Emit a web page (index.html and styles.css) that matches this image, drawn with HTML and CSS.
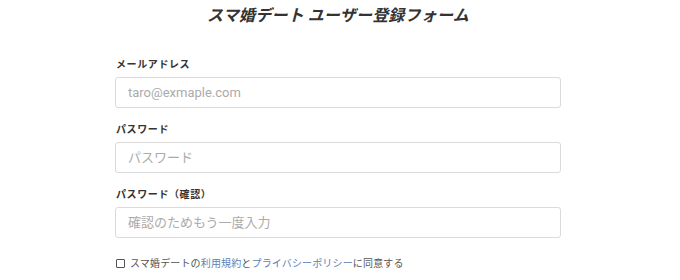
FILE: index.html
```html
<!DOCTYPE html>
<html lang="ja">
<head>
<meta charset="utf-8">
<title>スマ婚デート ユーザー登録フォーム</title>
<link rel="stylesheet" href="styles.css">
</head>
<body>
<main class="page">
  <h1 class="title">スマ婚デート ユーザー登録フォーム</h1>
  <form class="form">
    <div class="field">
      <label class="label" for="email">メールアドレス</label>
      <input class="input" id="email" type="email" placeholder="taro@exmaple.com">
    </div>
    <div class="field">
      <label class="label" for="pw">パスワード</label>
      <input class="input" id="pw" type="password" placeholder="パスワード">
    </div>
    <div class="field">
      <label class="label" for="pw2">パスワード（確認）</label>
      <input class="input" id="pw2" type="password" placeholder="確認のためもう一度入力">
    </div>
    <label class="agree">
      <span class="box"></span>
      <span class="agree-text">スマ婚デートの<a href="#" class="link">利用規約</a>と<a href="#" class="link">プライバシーポリシー</a>に同意する</span>
    </label>
  </form>
</main>
</body>
</html>
```
FILE: styles.css
```css
html, body {
  margin: 0;
  padding: 0;
  background: #ffffff;
}
body {
  font-family: "Noto Sans CJK JP", "Noto Sans", sans-serif;
  color: #333333;
}
.page {
  width: 446px;
  padding: 0 119px 0 115px;
}
.title {
  margin: 0;
  height: 28px;
  line-height: 28px;
  text-align: center;
  font-size: 16px;
  font-weight: 700;
  font-style: italic;
  color: #333333;
  letter-spacing: 0.2px;
}
.form {
  display: flex;
  flex-direction: column;
  gap: 14px;
  margin-top: 29px;
}
.field {
  display: flex;
  flex-direction: column;
  gap: 6px;
}
.label {
  font-size: 10px;
  line-height: 14px;
  font-weight: 700;
  letter-spacing: 0.6px;
  color: #333333;
  padding-left: 1px;
}
.input {
  box-sizing: border-box;
  width: 446px;
  height: 31px;
  margin: 0;
  padding: 0 12px;
  border: 1px solid #dadada;
  border-radius: 3px;
  background: #ffffff;
  font-family: Roboto, "Noto Sans CJK JP", sans-serif;
  font-size: 13px;
  color: #333333;
  outline: none;
}
.input::placeholder {
  color: #ababab;
}
.agree {
  display: flex;
  align-items: center;
  gap: 5px;
  margin-top: 4px;
  height: 14px;
  padding-left: 1px;
  font-size: 10px;
  line-height: 14px;
  color: #555555;
  letter-spacing: 0.15px;
}
.box {
  box-sizing: border-box;
  width: 9px;
  height: 9px;
  border: 1px solid #555555;
  border-radius: 1px;
  background: #ffffff;
}
.link {
  color: #5b82b8;
  text-decoration: none;
}
```
